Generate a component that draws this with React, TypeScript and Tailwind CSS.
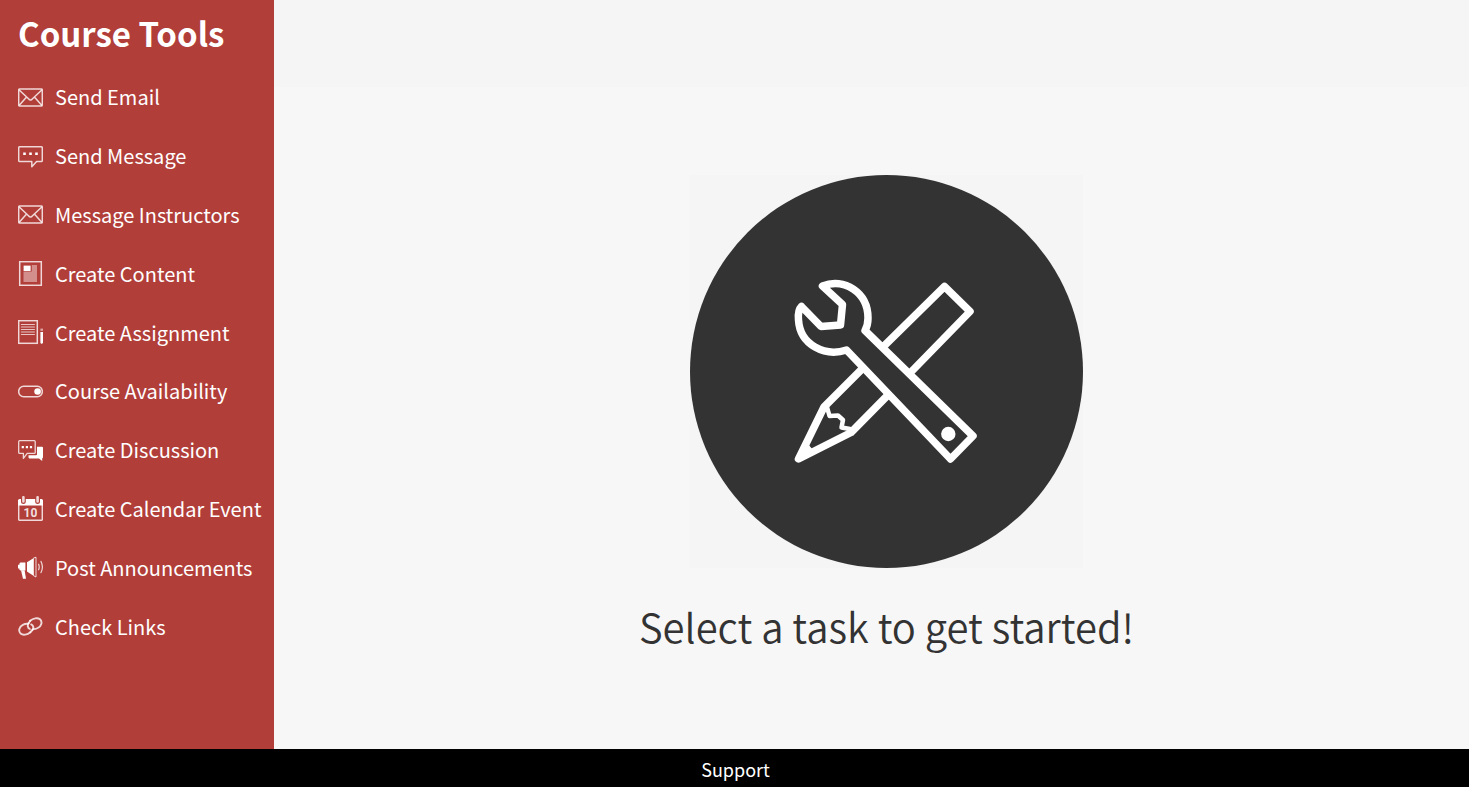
import type { ReactNode } from "react";

function Glyph({ children }: { children: ReactNode }) {
  return (
    <svg
      viewBox="0 0 25 25"
      className="size-[25px] shrink-0"
      fill="none"
      stroke="#fff"
      strokeOpacity={0.8}
      strokeWidth={1.5}
      strokeLinejoin="round"
      strokeLinecap="round"
      aria-hidden="true"
    >
      {children}
    </svg>
  );
}

const envelope = (
  <Glyph>
    <rect x="0.7" y="4.1" width="23.6" height="16.8" rx="1" />
    <path d="M1.5 5.2 10.5 13.8Q12.5 16.4 14.5 13.8L23.5 5.2M1.5 20 8.6 12M23.5 20 16.4 12" />
  </Glyph>
);

const message = (
  <Glyph>
    <path d="M1.7 2.7H23.3Q24.3 2.7 24.3 3.7V16.4Q24.3 17.4 23.3 17.4H18.6L13.8 22.8V17.4H1.7Q.7 17.4 .7 16.4V3.7Q.7 2.7 1.7 2.7Z" />
    <path d="M5.2 8.5h2.6v2.4H5.2zM11.2 8.5h2.6v2.4h-2.6zM17.2 8.5h2.6v2.4h-2.6z" fill="#fff" stroke="none" />
  </Glyph>
);

const content = (
  <Glyph>
    <rect x="1.7" y="0.7" width="21.6" height="23.6" strokeLinejoin="miter" />
    <path d="M5.5 10.5H13.8V4H19V21H5.5Z" fill="#fff" fillOpacity="0.42" stroke="none" />
    <rect x="5.6" y="4.6" width="7" height="5.4" fill="#fff" stroke="none" />
  </Glyph>
);

const assignment = (
  <Glyph>
    <rect x="0.7" y="0.7" width="18.6" height="22.6" strokeLinejoin="miter" />
    <path d="M3.4 4.5H16.4M3.4 7H16.4M3.4 9.5H16.4M3.4 12H16.4M3.4 14.5H16.4" strokeWidth="1.2" strokeOpacity="0.7" />
    <path d="M22.4 12H25V22.6L24.2 23.8H23L22.4 22.6Z" fill="#fff" stroke="none" />
    <path d="M22.4 8.6H25V10.8H22.4Z" fill="#fff" fillOpacity="0.55" stroke="none" />
  </Glyph>
);

const toggle = (
  <Glyph>
    <rect x="0.7" y="7.2" width="23.6" height="10.6" rx="5" />
    <circle cx="19.6" cy="12.5" r="3.3" fill="#fff" stroke="none" />
  </Glyph>
);

const discussion = (
  <Glyph>
    <path d="M19 8.8H24Q25 8.8 25 9.8V19.2Q25 20.2 24.2 20.2V23L21 20.4H11.5Q10.3 20.4 10.5 17.2H18Q19 17.2 19 16.2Z" fill="#fff" stroke="none" />
    <path d="M1.7 2.7H16.2Q17.2 2.7 17.2 3.7V14.4Q17.2 15.4 16.2 15.4H9.2L5.4 20.4V15.4H1.7Q.7 15.4 .7 14.4V3.7Q.7 2.7 1.7 2.7Z" strokeWidth="1.3" />
    <path d="M3.7 8h2.2v2.2H3.7zM7.8 8h2.2v2.2H7.8zM11.9 8h2.2v2.2h-2.2z" fill="#fff" stroke="none" />
  </Glyph>
);

const calendar = (
  <Glyph>
    <path d="M.7 5V23.3Q.7 24.3 1.7 24.3H23.3Q24.3 24.3 24.3 23.3V5" />
    <path d="M1.5 3H3V6Q3 8 5.4 8T7.8 6V3H17.2V6Q17.2 8 19.6 8T22 6V3H23.5Q25 3 25 4.5V9.4H0V4.5Q0 3 1.5 3Z" fill="#fff" stroke="none" />
    <path d="M5.4 1.2V5.4M19.6 1.2V5.4" strokeWidth="2.6" />
    <text
      x="12.5"
      y="20.8"
      textAnchor="middle"
      className="font-['Roboto',sans-serif] text-[12px] font-bold"
      fill="#fff"
      fillOpacity="0.85"
      stroke="none"
    >
      10
    </text>
  </Glyph>
);

const megaphone = (
  <Glyph>
    <path d="M1.4 8.4 2.4 7.6H7.4V15.6H2.4L1.4 14.8V13.4H0V9.8H1.4Z" fill="#fff" stroke="none" />
    <path d="M3 15.2H6.6L8 23.8H5Z" fill="#fff" stroke="none" />
    <path d="M9 7.2 15.8 2.9V20.9L9 16.4Z" fill="#fff" stroke="none" />
    <path d="M15.8 3 18 2.2V22L15.8 20.8" strokeWidth="1" />
    <path d="M20.6 9.2Q21.8 12 20.6 14.8M23 6.4Q25.8 12 23 17.6" strokeWidth="1.2" />
  </Glyph>
);

const chain = (
  <Glyph>
    <g strokeWidth="1.9">
      <path d="M12.4 18.2C9.4 20.8 5 21.6 2.6 19.6C0 17 1.2 12.6 4.8 10.8C6.4 10 8.4 9.6 9.8 9.8M13.2 10.4C15.4 11.4 16 14 14.4 16" />
      <path d="M12.2 6.8C15 4.2 19.6 3.4 22 5.2C24.8 7.8 23.4 12.2 19.8 14C18.2 14.8 16.4 15.2 15 15.1M11.8 15C9.6 14 9.2 11.4 10.6 9.2" />
      <path d="M10.6 9.2 12.2 6.8M12.4 18.2 14.4 16" />
    </g>
  </Glyph>
);

const tools: { label: string; icon: ReactNode }[] = [
  { label: "Send Email", icon: envelope },
  { label: "Send Message", icon: message },
  { label: "Message Instructors", icon: envelope },
  { label: "Create Content", icon: content },
  { label: "Create Assignment", icon: assignment },
  { label: "Course Availability", icon: toggle },
  { label: "Create Discussion", icon: discussion },
  { label: "Create Calendar Event", icon: calendar },
  { label: "Post Announcements", icon: megaphone },
  { label: "Check Links", icon: chain },
];

function ToolsBadge() {
  return (
    <div className="aspect-square w-[393px] max-w-full bg-[#f5f5f5]">
      <svg viewBox="690 175 393 393" className="size-full" aria-hidden="true">
        <circle cx="886.5" cy="371.5" r="196.5" fill="#333" />
        <g fill="none" stroke="#fff" strokeWidth="7.5" strokeLinejoin="round" strokeLinecap="round">
          <path d="M884 346 944.5 286.5 970 311.5 912 371" />
          <path d="M862 369 824 407 798.5 459 851 432.5 887 396" />
          <path d="M827 407 829.5 416 838 415.5 843 420 841.5 427.5 850 429" strokeWidth="4.5" />
          <path
            fill="#333"
            d="M822.5 286C844 277.5 868 292 868 318C868 323 867 327 865 330.5L973 436 950.5 459 846.5 350C825 357 800 345 798.5 320C798 315 799 309 801.5 306.5L821 326.5 840.5 325 842.5 304.5Z"
          />
        </g>
        <path d="M799 459 805 442 809.3 445.5 811.7 448.5 816 451Z" fill="#fff" />
        <circle cx="948.3" cy="434" r="7.2" fill="#fff" />
      </svg>
    </div>
  );
}

export default function App() {
  return (
    <div className="flex min-h-screen flex-col bg-[#f7f7f7] font-['Noto_Sans_CJK_SC',sans-serif]">
      <div className="flex flex-1">
        <aside className="w-[274px] shrink-0 bg-[#b13e39] text-white">
          <h1 className="flex h-[68px] items-center pb-0.5 pl-[18px] text-[33px] leading-none font-bold">
            Course Tools
          </h1>
          <nav aria-label="Course tools">
            <ul className="grid h-[588px] auto-rows-fr">
              {tools.map((tool) => (
                <li key={tool.label} className="flex">
                  <a href="#" className="flex flex-1 items-center gap-3 pl-[18px] text-[20px] whitespace-nowrap">
                    {tool.icon}
                    {tool.label}
                  </a>
                </li>
              ))}
            </ul>
          </nav>
        </aside>
        <main className="flex flex-1 flex-col">
          <div className="h-[87px] bg-[#f5f5f5]" />
          <div className="flex flex-col items-center pt-[88px] pl-[30px]">
            <ToolsBadge />
            <h2 className="mt-7 text-[40px] leading-[60px] font-[350] text-[#333]">Select a task to get started!</h2>
          </div>
        </main>
      </div>
      <footer className="flex h-[38px] items-center justify-center bg-black pt-0.5 pl-0.5">
        <a href="#" className="text-[18px] text-white">
          Support
        </a>
      </footer>
    </div>
  );
}
